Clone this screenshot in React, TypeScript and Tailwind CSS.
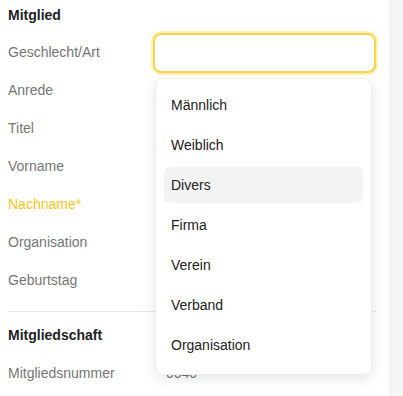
import { useState } from "react";

const font = { fontFamily: '"Liberation Sans", Arial, sans-serif' };

export default function App() {
  const [selected] = useState("Divers");

  const fields = [
    { label: "Geschlecht/Art" },
    { label: "Anrede" },
    { label: "Titel" },
    { label: "Vorname" },
    { label: "Nachname*", required: true },
    { label: "Organisation" },
    { label: "Geburtstag" },
  ];

  const options = ["Männlich", "Weiblich", "Divers", "Firma", "Verein", "Verband", "Organisation"];

  return (
    <div className="flex h-[396px] w-[403px] overflow-hidden bg-white" style={font}>
      <div className="relative w-[390px] shrink-0 bg-white pl-2 pr-[14px]">
        <div className="flex h-[33px] items-center pb-[3px] text-[14px] font-bold text-[#222222]">Mitglied</div>

        {fields.map((f, i) => (
          <div key={f.label} className="flex h-[38px] items-center">
            <div
              className={`w-[145px] shrink-0 text-[14px] ${f.required ? "text-[#f5c518]" : "text-[#757575]"}`}
            >
              {f.label}
            </div>
            {i === 0 && (
              <div className="mt-[2px] h-[40px] flex-1 rounded-lg border-2 border-[#fcd34d] bg-white ring-2 ring-[#fde68a]/60" />
            )}
          </div>
        ))}

        <div className="mt-[12px] h-px bg-[#e8e8e8]" />

        <div className="flex h-[42px] items-center pt-[4px] text-[14px] font-bold text-[#222222]">Mitgliedschaft</div>
        <div className="flex h-[36px] items-center pt-[2px]">
          <div className="w-[145px] shrink-0 text-[14px] text-[#757575]">Mitgliedsnummer</div>
          <div className="pl-[13px] text-[14px] text-[#757575]">0040</div>
        </div>

        <div className="absolute left-[155px] top-[78px] w-[217px] rounded-lg border border-[#eeeeee] bg-white px-2 pb-[11px] pt-2 shadow-[0_4px_14px_rgba(0,0,0,0.10)]">
          <div className="flex flex-col gap-1">
            {options.map((o) => (
              <div
                key={o}
                className={`flex h-[36px] items-center rounded-md pl-[7px] pr-2 text-[14px] text-[#222222] ${o === selected ? "bg-[#f3f3f3]" : ""}`}
              >
                {o}
              </div>
            ))}
          </div>
        </div>
      </div>
      <div className="flex-1 border-l border-[#ececec] bg-[#f5f5f5]" />
    </div>
  );
}
